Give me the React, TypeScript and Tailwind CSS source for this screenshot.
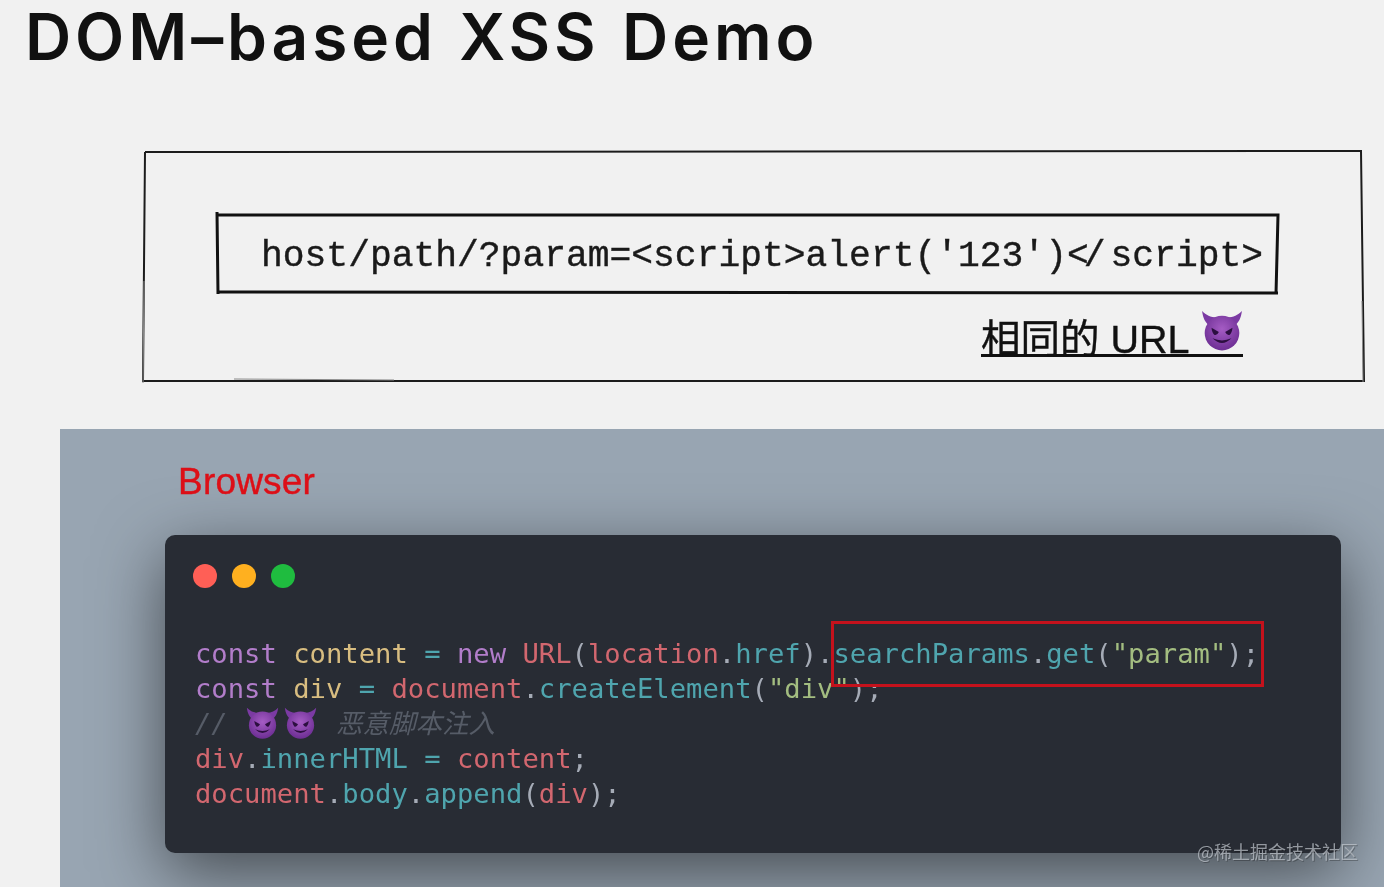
import React from 'react';

function Devil({ size, id }: { size: number; id: string }) {
  return (
    <svg width={size} height={size} viewBox="0 0 40 40" className="inline-block shrink-0">
      <defs>
        <radialGradient id={id} cx="50%" cy="38%" r="65%">
          <stop offset="0%" stopColor="#a55cc4" />
          <stop offset="100%" stopColor="#6a2c91" />
        </radialGradient>
      </defs>
      <path d="M1 1 C2 8 4 12 8 15 L15 7 C9 7 5 5 1 1Z" fill="#7b3aa3" />
      <path d="M39 1 C38 8 36 12 32 15 L25 7 C31 7 35 5 39 1Z" fill="#7b3aa3" />
      <circle cx="20" cy="22" r="16.5" fill={`url(#${id})`} />
      <path d="M10 17 L17 21 Q15 25 12.5 23.5 Q10.5 22 10 17Z" fill="#2c0f40" />
      <path d="M30 17 L23 21 Q25 25 27.5 23.5 Q29.5 22 30 17Z" fill="#2c0f40" />
      <path d="M11 27 Q20 36 29 27 Q20 31 11 27Z" fill="#2c0f40" />
    </svg>
  );
}

const K = 'text-[#b27dca]';
const Y = 'text-[#d8bd80]';
const R = 'text-[#d2676f]';
const T = 'text-[#4fa5ae]';
const W = 'text-[#a5abb6]';
const G = 'text-[#a3bd80]';

function Line({ parts }: { parts: [string, string][] }) {
  return (
    <div className="h-[35px] leading-[35px] whitespace-pre">
      {parts.map(([c, t], i) => (
        <span key={i} className={c}>
          {t}
        </span>
      ))}
    </div>
  );
}

export default function App() {
  return (
    <div className="relative w-[1384px] h-[887px] overflow-hidden bg-[#f1f1f1] blur-[0.5px] font-['Inter',sans-serif]">
      <h1 className="pl-[25px] h-[74px] text-[64px] leading-[74px] font-semibold tracking-[3.9px] [word-spacing:2.5px] text-[#111] whitespace-nowrap">
        DOM–based XSS Demo
      </h1>

      {/* sketch box */}
      <div className="relative ml-[144px] mt-[77px] w-[1220px] h-[232px] pt-[62px] pl-[73px]">
        <svg className="absolute left-0 top-0 overflow-visible" width="1222" height="233" fill="none" stroke="#1c1c1c">
          <path strokeWidth="2" d="M1 1 L1217 0 L1220 230 L-1 230 L1 1" />
          <path strokeWidth="1" stroke="#888" d="M0 130 L-1 232 M90 228 L250 229 M1218 150 L1219 231" />
          <path strokeWidth="3" stroke="#111" d="M73 61 L74 143 M72 64 L1134 64 L1132 143 M74 141 L1134 142" />
        </svg>
        <div className="relative w-[1061px] h-[80px] pl-[44px] pt-[9px] flex items-center font-['Liberation_Mono',monospace] text-[36.3px] [-webkit-text-stroke:0.4px_#1a1a1a] text-[#1a1a1a] whitespace-nowrap">
          <span className="whitespace-pre">
            host/path/?param=&lt;script&gt;alert('123')<span className="tracking-[-5px]">&lt;</span><span className="tracking-[5px]">/</span>script&gt;
          </span>
        </div>
        <div className="absolute left-[837px] top-[158px] w-[262px] h-[48px] border-b-[3px] border-[#111] flex items-end gap-[11px] text-[#111]">
          <span className="text-[39.5px] leading-[30px] [-webkit-text-stroke:0.4px_#111] font-['Liberation_Sans','Noto_Sans_CJK_SC',sans-serif]">相同的 URL</span>
          <span className="self-start mt-[1px]">
            <Devil size={42} id="d1" />
          </span>
        </div>
      </div>

      {/* browser panel */}
      <div className="absolute left-[60px] top-[429px] right-0 bottom-0 bg-[#98a5b2] pl-[105px] pt-[106px]">
        <div className="absolute left-[118px] top-[31px] text-[37px] leading-[44px] tracking-[0.2px] text-[#dd0f17] [-webkit-text-stroke:0.4px_#dd0f17] font-['Liberation_Sans',sans-serif]">
          Browser
        </div>
        <div className="w-[1176px] h-[318px] rounded-[10px] bg-[#282c34] shadow-[0_20px_68px_rgba(0,0,0,0.55)] pl-[31px] pt-[29px] font-['DejaVu_Sans_Mono','Noto_Sans_CJK_SC',monospace] text-[27.2px]">
          <div className="flex gap-[15px] -ml-[3px]">
            <span className="w-[24px] h-[24px] rounded-full bg-[#ff5f56]" />
            <span className="w-[24px] h-[24px] rounded-full bg-[#ffb01f]" />
            <span className="w-[24px] h-[24px] rounded-full bg-[#1fbc3f]" />
          </div>
          <div className="mt-[48px] -ml-[1px]">
            <Line
              parts={[
                [K, 'const '],
                [Y, 'content '],
                [T, '= '],
                [K, 'new '],
                [R, 'URL'],
                [W, '('],
                [R, 'location'],
                [W, '.'],
                [T, 'href'],
                [W, ').'],
                [T, 'searchParams'],
                [W, '.'],
                [T, 'get'],
                [W, '('],
                [G, '"param"'],
                [W, ');'],
              ]}
            />
            <Line
              parts={[
                [K, 'const '],
                [Y, 'div '],
                [T, '= '],
                [R, 'document'],
                [W, '.'],
                [T, 'createElement'],
                [W, '('],
                [G, '"div"'],
                [W, ');'],
              ]}
            />
            <div className="h-[35px] leading-[35px] flex items-center italic text-[#565c67] whitespace-pre">
              <span>// </span>
              <span className="ml-[2px] flex gap-[5px]">
                <Devil size={33} id="d2" />
                <Devil size={33} id="d3" />
              </span>
              <span className="ml-[19px] text-[26.5px]">恶意脚本注入</span>
            </div>
            <Line
              parts={[
                [R, 'div'],
                [W, '.'],
                [T, 'innerHTML '],
                [T, '= '],
                [R, 'content'],
                [W, ';'],
              ]}
            />
            <Line
              parts={[
                [R, 'document'],
                [W, '.'],
                [T, 'body'],
                [W, '.'],
                [T, 'append'],
                [W, '('],
                [R, 'div'],
                [W, ');'],
              ]}
            />
          </div>
        </div>
      </div>

      {/* highlight + watermark */}
      <div className="absolute left-[831px] top-[621px] w-[433px] h-[66px] border-[3px] border-[#c4121c]" />
      <div className="absolute left-[1197px] top-[838px] text-[18px] leading-[26px] text-[#c2c8ce]/70 [text-shadow:1px_1px_0_rgba(0,0,0,0.25)] font-['Noto_Sans_CJK_SC',sans-serif] whitespace-nowrap">
        @稀土掘金技术社区
      </div>
    </div>
  );
}
